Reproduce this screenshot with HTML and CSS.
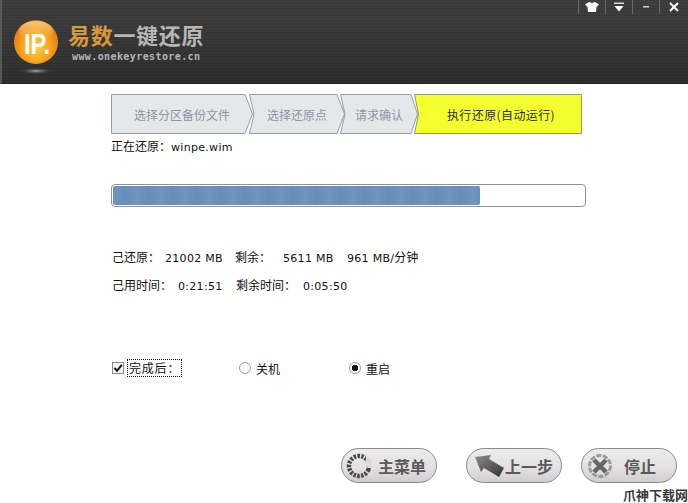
FILE: index.html
```html
<!DOCTYPE html>
<html lang="zh-CN">
<head>
<meta charset="utf-8">
<title>易数一键还原</title>
<link rel="stylesheet" href="styles.css">
</head>
<body>
<div class="app">
  <header class="header">
    <div class="brand">
      <svg class="logo" width="56" height="62" viewBox="0 0 56 62">
        <defs>
          <radialGradient id="orb" cx="0.5" cy="0.62" r="0.62">
            <stop offset="0" stop-color="#fdd24a"/>
            <stop offset="0.55" stop-color="#f6a11c"/>
            <stop offset="1" stop-color="#dd6f08"/>
          </radialGradient>
          <linearGradient id="sheen" x1="0" y1="0" x2="0" y2="1">
            <stop offset="0" stop-color="#ffe9a8" stop-opacity=".75"/>
            <stop offset="1" stop-color="#ffd060" stop-opacity="0"/>
          </linearGradient>
          <radialGradient id="shadow" cx="0.5" cy="0.5" r="0.5">
            <stop offset="0" stop-color="#a8a8a8"/>
            <stop offset="1" stop-color="#555" stop-opacity="0"/>
          </radialGradient>
        </defs>
        <ellipse cx="28" cy="55" rx="15" ry="3" fill="url(#shadow)"/>
        <circle cx="28" cy="26" r="22" fill="url(#orb)"/>
        <ellipse cx="28" cy="15" rx="17" ry="10" fill="url(#sheen)"/>
        <text class="logo-mark" x="16" y="38" textLength="26" lengthAdjust="spacingAndGlyphs">IP.</text>
      </svg>
      <div class="brand-text">
        <div class="brand-title"><span class="brand-accent">易数</span>一键还原</div>
        <div class="brand-url">www.onekeyrestore.cn</div>
      </div>
    </div>
    <div class="winctl">
      <span class="winbtn">
        <svg width="14" height="12" viewBox="0 0 14 12"><path d="M4 1 L7 2 L10 1 L14 3.5 L11.5 6 L11 11 L3 11 L2.5 6 L0 3.5 Z" fill="#fff"/></svg>
      </span>
      <span class="winbtn">
        <svg width="12" height="12" viewBox="0 0 12 12"><path d="M1 1.5 H11 V3 H1 Z" fill="#ddd"/><path d="M1.5 5 H10.500 L6 10.500 Z" fill="#fff"/></svg>
      </span>
      <span class="winbtn">
        <svg width="10" height="12" viewBox="0 0 10 12"><path d="M2 5 H8 V6.500 H2 Z" fill="#d0d0d0"/></svg>
      </span>
      <span class="winbtn winbtn-close">
        <svg width="12" height="12" viewBox="0 0 12 12"><path d="M2 2 L10 10 M10 2 L2 10" stroke="#fff" stroke-width="2"/></svg>
      </span>
    </div>
  </header>

  <main class="content">
    <nav class="steps">
      <div class="step step-a">
        <svg class="step-bg" width="142" height="40" viewBox="0 0 142 40"><path class="step-shape" d="M.5 .5 H134 L141.500 20 L134 39.500 H.5 Z"/></svg>
        <span class="step-label">选择分区备份文件</span>
      </div>
      <div class="step step-b">
        <svg class="step-bg" width="96" height="40" viewBox="0 0 96 40"><path class="step-shape" d="M.5 .5 H88 L95.500 20 L88 39.500 H.5 L5 20 Z"/></svg>
        <span class="step-label">选择还原点</span>
      </div>
      <div class="step step-c">
        <svg class="step-bg" width="78" height="40" viewBox="0 0 78 40"><path class="step-shape" d="M.5 .5 H71 L77.500 20 L71 39.500 H.5 L5 20 Z"/></svg>
        <span class="step-label">请求确认</span>
      </div>
      <div class="step step-d">
        <svg class="step-bg" width="168" height="40" viewBox="0 0 168 40"><path class="step-shape step-active" d="M.5 .5 H167.500 V39.500 H.5 L4.500 20 Z"/></svg>
        <span class="step-label step-label-active">执行还原(自动运行)</span>
      </div>
    </nav>

    <p class="current">正在还原：<span class="latin">winpe.wim</span></p>

    <div class="progress"><div class="progress-fill" style="width:367px"></div></div>

    <div class="stats stats-first">
      <span class="s1">己还原：</span><span class="latin s2">21002 MB</span><span class="s3">剩余：</span><span class="latin s4">5611 MB</span><span class="latin s5">961 MB/<span class="cjk">分钟</span></span>
    </div>
    <div class="stats stats-second">
      <span class="t1">己用时间：</span><span class="latin t2">0:21:51</span><span class="t3">剩余时间：</span><span class="latin t4">0:05:50</span>
    </div>

    <div class="options">
      <span class="check">
        <svg width="12" height="12" viewBox="0 0 12 12"><rect x=".5" y=".5" width="11" height="11" fill="#f4f4f4" stroke="#8a8a8a"/><path d="M2.500 6 L5 8.800 L9.800 2.800" fill="none" stroke="#111" stroke-width="2"/></svg>
      </span>
      <span class="check-label">完成后：</span>
      <span class="radio radio-off"></span>
      <span class="radio-label radio-label-a">关机</span>
      <span class="radio radio-on"></span>
      <span class="radio-label">重启</span>
    </div>

    <div class="actions">
      <button class="btn btn-menu" type="button">
        <svg width="26" height="26" viewBox="0 0 26 26"><circle cx="13" cy="13" r="10" fill="none" stroke="#4a4a4a" stroke-width="4.500" stroke-dasharray="2.500 1.300" transform="rotate(20 13 13)"/><path d="M20 2 L26 7 L26 16 L20 13 Z" fill="#dcdadb"/></svg>
        <span>主菜单</span>
      </button>
      <button class="btn btn-prev" type="button">
        <svg width="30" height="24" viewBox="0 0 30 24"><defs><linearGradient id="arr" x1="0" y1="0" x2="1" y2="1"><stop offset="0" stop-color="#8d8d8d"/><stop offset="1" stop-color="#333"/></linearGradient></defs><path d="M1 3 L17 1 L15 5 L30 14 L25 23 L10 14 L7 18 Z" fill="url(#arr)"/></svg>
        <span>上一步</span>
      </button>
      <button class="btn btn-stop" type="button">
        <svg width="28" height="26" viewBox="0 0 28 26"><circle cx="14" cy="13" r="10.500" fill="none" stroke="#9a9a9a" stroke-width="3" stroke-dasharray="5 1.500"/><path d="M8 7 L20 19 M20 7 L8 19" stroke="#666" stroke-width="4.500"/></svg>
        <span>停止</span>
      </button>
    </div>
  </main>
  <div class="watermark">爪神下载网</div>
</div>
</body>
</html>
```

FILE: styles.css
```css
* { box-sizing: border-box; }
html, body { margin: 0; padding: 0; background: #fff; }
body {
  width: 688px;
  height: 503px;
  overflow: hidden;
  font-family: "Noto Sans CJK SC", "Liberation Sans", sans-serif;
  font-size: 12px;
  color: #111;
}
.app { position: relative; width: 688px; height: 503px; }

.header {
  height: 84px;
  display: flex;
  justify-content: space-between;
  align-items: flex-start;
  border-left: 2px solid #55585c;
  border-bottom: 1px solid #222;
  background-color: #353535;
  background-image:
    repeating-linear-gradient(0deg, rgba(255,255,255,.025) 0 1px, transparent 1px 3px),
    linear-gradient(180deg, #3c3c3c 0%, #343434 55%, #2c2c2c 100%);
}
.brand { display: flex; align-items: flex-start; padding: 16px 0 0 6px; }
.logo { flex: none; }
.logo-mark {
  font-family: "Liberation Sans", sans-serif;
  font-size: 29px;
  font-weight: 700;
  fill: #fff;
}
.brand-text { margin: 3px 0 0 4px; }
.brand-title {
  font-size: 22px;
  line-height: 31px;
  font-weight: 700;
  letter-spacing: .7px;
  color: #b6b6b6;
  white-space: nowrap;
}
.brand-accent { color: #d8973c; }
.brand-url {
  margin: 0 0 0 4px;
  font-family: "DejaVu Sans Mono", monospace;
  font-size: 10px;
  line-height: 14px;
  font-weight: 700;
  letter-spacing: .4px;
  color: #b4b4b4;
  white-space: nowrap;
}

.winctl { display: flex; height: 14px; }
.winbtn {
  width: 27px;
  height: 14px;
  display: flex;
  align-items: center;
  justify-content: center;
  border-left: 1px solid #6a6a6a;
}
.winbtn-close { width: 29px; }

.content { padding: 10px 0 0 111px; }

.steps { display: flex; height: 40px; }
.step { position: relative; height: 40px; padding-top: 2px; display: flex; align-items: center; justify-content: center; }
.step-a { width: 142px; }
.step-b { width: 96px; margin-left: -4px; }
.step-c { width: 78px; margin-left: -5px; }
.step-d { width: 168px; margin-left: -4px; padding-left: 6px; }
.step-bg { position: absolute; left: 0; top: 0; }
.step-shape { fill: #e6e7e9; stroke: #8f9fb2; stroke-width: 1; }
.step-active { fill: #f6ff2e; stroke: #8d9a70; }
.step-label { position: relative; color: #8a97a6; white-space: nowrap; line-height: 16px; }
.step-label-active { color: #26331f; letter-spacing: .4px; }

.current { margin: 3px 0 0 0; height: 17px; line-height: 17px; white-space: nowrap; }
.latin { font-family: "DejaVu Sans", sans-serif; font-size: 11px; letter-spacing: .3px; }
.cjk { font-family: "Noto Sans CJK SC", sans-serif; font-size: 12px; letter-spacing: 0; }

.progress {
  width: 475px;
  height: 23px;
  margin-top: 30px;
  padding: 1px 0 0 1px;
  background: #fff;
  border: 1px solid #8d9296;
  border-radius: 4px;
}
.progress-fill {
  height: 19px;
  border-radius: 2px;
  background: repeating-linear-gradient(90deg, #7095bf 0, #668cb8 12px, #7095bf 24px);
}

.stats { height: 17px; line-height: 17px; display: flex; align-items: baseline; white-space: nowrap; padding-left: 1px; }
.stats-first { margin-top: 41px; }
.stats-second { margin-top: 11px; }
.s1 { width: 53px; }
.s2 { width: 70px; }
.s3 { width: 48px; }
.s4 { width: 64px; }
.t1 { width: 66px; }
.t2 { width: 58px; }
.t3 { width: 67px; }

.options { display: flex; align-items: center; height: 18px; margin-top: 66px; padding-left: 1px; }
.check { display: flex; width: 15px; }
.check-label {
  width: 55px;
  height: 18px;
  line-height: 16px;
  padding-left: 1px;
  border: 1px dotted #111;
  letter-spacing: .8px;
  white-space: nowrap;
}
.radio {
  width: 12px;
  height: 12px;
  border-radius: 50%;
  background: #fafafa;
  border: 1px solid #9a9a9a;
  margin-left: 57px;
}
.radio-on { background: radial-gradient(circle, #111 0 3px, #fafafa 3.500px); margin-left: 0; }
.radio-label { margin-left: 5px; }
.radio-label-a { width: 93px; margin-left: 5px; }

.actions { display: flex; margin: 71px 0 0 230px; }
.btn {
  width: 96px;
  height: 35px;
  padding: 0 0 0 2px;
  display: flex;
  align-items: center;
  gap: 3px;
  font-family: "Noto Sans CJK SC", sans-serif;
  font-size: 16px;
  font-weight: 700;
  color: #5a5a5a;
  background: linear-gradient(180deg, #ececec 0%, #e3e0e1 60%, #cfcdce 100%);
  border: 1px solid #8b8b8b;
  border-radius: 18px;
}
.btn-menu { padding-left: 4px; gap: 6px; }
.btn-prev { margin-left: 29px; padding-left: 7px; gap: 1px; }
.btn-stop { margin-left: 19px; padding-left: 4px; gap: 10px; }

.watermark {
  position: absolute;
  right: 0;
  bottom: 0;
  font-size: 13px;
  line-height: 16px;
  font-weight: 700;
  color: #3a3a3a;
  white-space: nowrap;
}
```
